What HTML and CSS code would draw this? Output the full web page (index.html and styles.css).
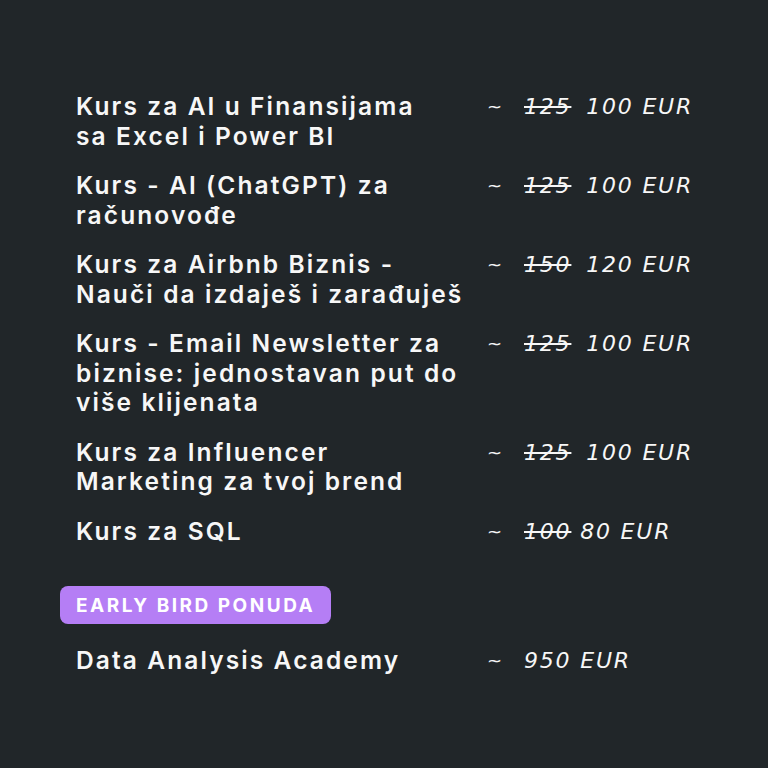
FILE: index.html
```html
<!DOCTYPE html>
<html>
<head>
    <title>Kursevi - cjenovnik</title>
    <link rel="stylesheet" href="styles.css">
</head>
<body>
    <div class="price-list">
        <div class="row">
            <div class="name">Kurs za AI u Finansijama<br>sa Excel i Power BI</div>
            <div class="tilde">~</div>
            <div class="price"><s>125</s> 100 EUR</div>
        </div>
        <div class="row">
            <div class="name">Kurs - AI (ChatGPT) za<br>računovođe</div>
            <div class="tilde">~</div>
            <div class="price"><s>125</s> 100 EUR</div>
        </div>
        <div class="row">
            <div class="name">Kurs za Airbnb Biznis -<br>Nauči da izdaješ i zarađuješ</div>
            <div class="tilde">~</div>
            <div class="price"><s>150</s> 120 EUR</div>
        </div>
        <div class="row">
            <div class="name">Kurs - Email Newsletter za<br>biznise: jednostavan put do<br>više klijenata</div>
            <div class="tilde">~</div>
            <div class="price"><s>125</s> 100 EUR</div>
        </div>
        <div class="row">
            <div class="name">Kurs za Influencer<br>Marketing za tvoj brend</div>
            <div class="tilde">~</div>
            <div class="price"><s>125</s> 100 EUR</div>
        </div>
        <div class="row">
            <div class="name">Kurs za SQL</div>
            <div class="tilde">~</div>
            <div class="price"><s class="tight">100</s> 80 EUR</div>
        </div>

        <div class="badge">EARLY BIRD PONUDA</div>

        <div class="row">
            <div class="name">Data Analysis Academy</div>
            <div class="tilde">~</div>
            <div class="price">950 EUR</div>
        </div>
    </div>
</body>
</html>
```

FILE: styles.css
```css
body {
    margin: 0;
    background-color: #212629;
    color: #f7f7f7;
    font-family: Inter, "DejaVu Sans", sans-serif;
}

.price-list {
    width: 768px;
    height: 768px;
    box-sizing: border-box;
    padding: 92px 0 0 76px;
    display: flex;
    flex-direction: column;
    gap: 20px;
}

.row {
    display: grid;
    grid-template-columns: 411px 37px auto;
    line-height: 29.5px;
}

.name {
    font-size: 24.5px;
    font-weight: 600;
    letter-spacing: 2.1px;
    white-space: nowrap;
}

.tilde {
    font-family: "DejaVu Sans", sans-serif;
    font-size: 18px;
}

.price {
    font-family: "DejaVu Sans", sans-serif;
    font-size: 22px;
    font-style: italic;
    font-weight: 400;
    letter-spacing: 1.8px;
    white-space: nowrap;
}

.price s {
    margin-right: 6px;
    text-decoration-thickness: 1.5px;
}

.price s.tight {
    margin-right: 0;
}

.badge {
    align-self: flex-start;
    margin: 20px 0 2px -16px;
    padding: 7px 16px 6px 16px;
    background-color: #b57ef5;
    border-radius: 8px;
    font-size: 19px;
    font-weight: 700;
    letter-spacing: 2.5px;
    line-height: 25px;
    color: #ffffff;
}
```
